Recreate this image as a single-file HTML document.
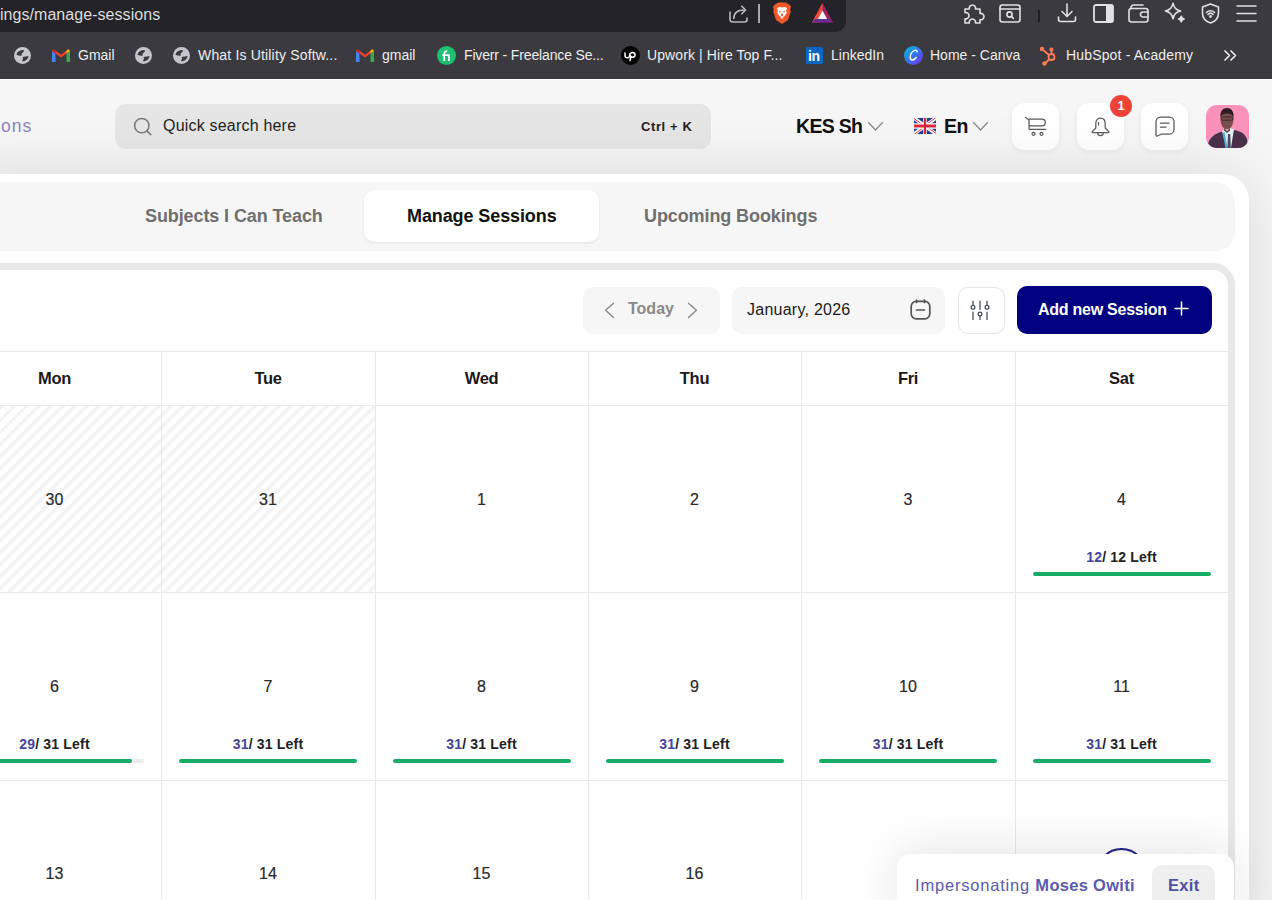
<!DOCTYPE html>
<html><head><meta charset="utf-8">
<style>
*{box-sizing:border-box;margin:0;padding:0}
html,body{width:1272px;height:900px;overflow:hidden;background:#f6f6f6;font-family:"Liberation Sans",sans-serif}
.abs{position:absolute}
.txt{position:absolute;white-space:nowrap;line-height:1}
svg{position:absolute;overflow:visible}
#chrome{left:0;top:0;width:1272px;height:79px;background:#3b3a3f}
#url{left:-20px;top:0;width:866px;height:32px;background:#242328;border-bottom-right-radius:11px}
.bm{position:absolute;top:48px;color:#ededed;font-size:14px;letter-spacing:0;white-space:nowrap;line-height:1}
#hdr{left:0;top:79px;width:1272px;height:95px;background:#f6f6f6;border-top:1px solid #fff}
#search{left:115px;top:104px;width:596px;height:45px;background:#e6e6e6;border-radius:11px}
.ibtn{position:absolute;top:103px;width:47px;height:47px;background:#fff;border-radius:12px;box-shadow:0 2px 6px rgba(0,0,0,.05)}
#rightbg{left:1249px;top:174px;width:23px;height:726px;background:linear-gradient(90deg,#e8e8e8,#eeeeee)}
#panel{left:-40px;top:174px;width:1289px;height:760px;background:#fff;border-top-right-radius:26px;box-shadow:0 0 64px rgba(0,0,0,.115)}
#tabs{left:-40px;top:182px;width:1275px;height:69px;background:#f6f6f6;border-radius:0 20px 20px 0}
#acttab{left:364px;top:190px;width:235px;height:52px;background:#fff;border-radius:10px;box-shadow:0 1px 3px rgba(0,0,0,.08)}
#cal{left:-300px;top:263px;width:1535px;height:760px;border:7px solid #e8e8e8;border-radius:0 22px 0 0;background:#fff}
.tbtn{position:absolute;top:287px;height:47px;border-radius:10px}
.vl{position:absolute;top:351px;width:1px;height:560px;background:#e9e9e9}
.hl{position:absolute;left:0;width:1228px;height:1px;background:#e9e9e9}
.hd{position:absolute;top:369.5px;font-size:16.5px;letter-spacing:-0.3px;font-weight:bold;color:#1a1a1a;text-align:center;line-height:1}
.dn{position:absolute;font-size:16px;color:#2a2a2a;text-align:center;line-height:1;-webkit-text-stroke:0.2px #2a2a2a}
.lf{position:absolute;font-size:14px;font-weight:bold;color:#222;text-align:center;line-height:1;letter-spacing:0.2px}
.lf span{color:#4544a0}
.bar{position:absolute;height:4px;border-radius:2px;background:#16ae66}
.hatch{position:absolute;background:repeating-linear-gradient(135deg,#f3f3f3 0 3.5px,#fefefe 3.5px 8.5px)}
</style></head>
<body>

<div id="chrome" class="abs"></div>
<div id="url" class="abs"></div>
<div class="txt" style="left:0;top:7px;color:#dcdcdc;font-size:16px;letter-spacing:0.05px">ings/manage-sessions</div>
<svg style="left:729px;top:4px" width="20" height="19" viewBox="0 0 20 19" fill="none" stroke="#b9b9bd" stroke-width="1.6" stroke-linecap="round" stroke-linejoin="round"><path d="M1 8v7.5a2.5 2.5 0 0 0 2.5 2.5h12a2.5 2.5 0 0 0 2.5-2.5V14"/><path d="M4.8 14.5c0-5.5 3.5-8.5 10.5-8.5"/><path d="M12.8 2.2L16.6 6l-3.8 3.8"/></svg>
<div class="abs" style="left:758px;top:4px;width:1.5px;height:19px;background:#a9a9ad"></div>
<svg style="left:772px;top:2px" width="20" height="22" viewBox="0 0 20 22"><path d="M3 2.5L6.5 0.5h7L17 2.5l2 2-0.8 3 0.6 2-2.8 8.5L10 22l-6-4-2.8-8.5 0.6-2L1 4.5z" fill="#f1592a"/><path d="M5 6l2.5-1 2.5 0.6L12.5 5 15 6l-1 3 1 1.5-2.5 3.5-2.5 1.5-2.5-1.5L5 10.5 6 9z" fill="#fff"/><path d="M8 15.5h4l-2 1.6z" fill="#fff"/><path d="M6.8 8.6l2.3.9-1.2 1.2z M13.2 8.6l-2.3.9 1.2 1.2z M9.1 11.5h1.8v2.3l-.9.6-.9-.6z" fill="#f1592a"/></svg>
<svg style="left:812px;top:3px" width="21" height="20" viewBox="0 0 21 20"><path d="M10.5 0L0 19.5h21z" fill="#9e1f63"/><path d="M10.5 0L0 19.5h6.5l4-13z" fill="#f04b3a"/><path d="M0 19.5h21l-3-3.5H3z" fill="#662d91"/><path d="M10.5 7.5L6 16h9z" fill="#fff"/></svg>
<svg style="left:963px;top:2px" width="23" height="22" viewBox="0 0 23 22" fill="none" stroke="#e2e2e4" stroke-width="1.6" stroke-linecap="round" stroke-linejoin="round"><path d="M2 7h4.3a3.2 3.2 0 1 1 6.2 0H17v4.5a3.2 3.2 0 1 1 0 6.2V21h-4.5a3.2 3.2 0 1 0-6.2 0H2v-4.2a3.2 3.2 0 1 0 0-6.2z"/></svg>
<svg style="left:999px;top:4px" width="22" height="19" viewBox="0 0 22 19" fill="none" stroke="#e2e2e4" stroke-width="1.6" stroke-linecap="round" stroke-linejoin="round"><rect x="1" y="1" width="20" height="17" rx="2.5"/><path d="M1 5h20"/><circle cx="10.5" cy="10.5" r="2.6"/><path d="M12.4 12.4l2 2"/></svg>
<div class="abs" style="left:1038px;top:10px;width:2px;height:12px;background:#202024"></div>
<svg style="left:1057px;top:3px" width="20" height="20" viewBox="0 0 20 20" fill="none" stroke="#e2e2e4" stroke-width="1.6" stroke-linecap="round" stroke-linejoin="round"><path d="M10 1v12M5 8.5l5 5 5-5"/><path d="M1.5 14v2.5a2 2 0 0 0 2 2h13a2 2 0 0 0 2-2V14"/></svg>
<svg style="left:1093px;top:4px" width="21" height="19" viewBox="0 0 21 19"><rect x="1" y="1" width="19" height="17" rx="2" fill="none" stroke="#e2e2e4" stroke-width="1.8"/><rect x="13" y="1" width="7" height="17" fill="#e2e2e4"/></svg>
<svg style="left:1128px;top:4px" width="21" height="19" viewBox="0 0 21 19" fill="none" stroke="#e2e2e4" stroke-width="1.6" stroke-linecap="round" stroke-linejoin="round"><path d="M3 4.5V3.5A2.5 2.5 0 0 1 5.5 1H15"/><rect x="1" y="4.5" width="19" height="13.5" rx="2.5"/><path d="M20 8h-5a2.5 2.5 0 0 0 0 5h5"/></svg>
<svg style="left:1164px;top:2px" width="22" height="22" viewBox="0 0 22 22" fill="none" stroke="#e2e2e4" stroke-width="1.6" stroke-linecap="round" stroke-linejoin="round"><path d="M9 1.2c.8 4.6 3 6.9 7.6 7.8-4.6.9-6.8 3.2-7.6 7.8-.8-4.6-3-6.9-7.6-7.8 4.6-.9 6.8-3.2 7.6-7.8z"/><path d="M17.3 14.2c.3 1.7 1.1 2.5 2.8 2.8-1.7.3-2.5 1.1-2.8 2.8-.3-1.7-1.1-2.5-2.8-2.8 1.7-.3 2.5-1.1 2.8-2.8z" fill="#e2e2e4"/></svg>
<svg style="left:1201px;top:3px" width="19" height="21" viewBox="0 0 19 21" fill="none" stroke="#e2e2e4" stroke-width="1.6" stroke-linecap="round" stroke-linejoin="round"><path d="M9.5 1L17.5 4v6c0 5-3.5 8.5-8 10-4.5-1.5-8-5-8-10V4z"/><path d="M5.5 9.5a5.5 5.5 0 0 1 8 0M7 11.5a3 3 0 0 1 5 0"/><circle cx="9.5" cy="13.5" r=".6" fill="#e2e2e4"/></svg>
<svg style="left:1236px;top:4px" width="21" height="19" viewBox="0 0 21 19" fill="none" stroke="#e2e2e4" stroke-width="1.6" stroke-linecap="round" stroke-linejoin="round" stroke-width="1.8"><path d="M1 2h19M1 9.5h19M1 17h19"/></svg>
<svg style="left:14px;top:47px" width="17" height="17" viewBox="0 0 16 16"><circle cx="8" cy="8" r="8" fill="#c4c6ca"/><path d="M2.3 7.3C2.8 4.8 5 3 8 2.9c1.5 0 2 .7 1 1.6-1 .9-2.2 1.5-1.8 3.7-1.7.3-3.2-.2-4.9-.9z M8 9.4c2-.5 4-.7 5.7-1-.3 2.6-2.2 4.6-5.2 5.1-1 0-1.2-.5-.5-1.5.8-1 .5-1.8 0-2.6z" fill="#3b3a3f"/></svg>
<svg style="left:52px;top:49px" width="18" height="13" viewBox="0 0 18 13"><path d="M0 2v11h3.5V4.5z" fill="#4285f4"/><path d="M18 2v11h-3.5V4.5z" fill="#34a853"/><path d="M0 2L9 8.5 18 2 16.5.2 9 5.6 1.5.2z" fill="#ea4335"/><path d="M14.5 4.5L18 2 16.5.2 14.5 1.6z" fill="#fbbc04"/><path d="M0 2l3.5 2.5V1.6L1.5.2z" fill="#c5221f"/></svg>
<div class="bm" style="left:78px">Gmail</div>
<svg style="left:135px;top:47px" width="17" height="17" viewBox="0 0 16 16"><circle cx="8" cy="8" r="8" fill="#c4c6ca"/><path d="M2.3 7.3C2.8 4.8 5 3 8 2.9c1.5 0 2 .7 1 1.6-1 .9-2.2 1.5-1.8 3.7-1.7.3-3.2-.2-4.9-.9z M8 9.4c2-.5 4-.7 5.7-1-.3 2.6-2.2 4.6-5.2 5.1-1 0-1.2-.5-.5-1.5.8-1 .5-1.8 0-2.6z" fill="#3b3a3f"/></svg>
<svg style="left:173px;top:47px" width="17" height="17" viewBox="0 0 16 16"><circle cx="8" cy="8" r="8" fill="#c4c6ca"/><path d="M2.3 7.3C2.8 4.8 5 3 8 2.9c1.5 0 2 .7 1 1.6-1 .9-2.2 1.5-1.8 3.7-1.7.3-3.2-.2-4.9-.9z M8 9.4c2-.5 4-.7 5.7-1-.3 2.6-2.2 4.6-5.2 5.1-1 0-1.2-.5-.5-1.5.8-1 .5-1.8 0-2.6z" fill="#3b3a3f"/></svg>
<div class="bm" style="left:198px;letter-spacing:0.17px">What Is Utility Softw...</div>
<svg style="left:356px;top:49px" width="18" height="13" viewBox="0 0 18 13"><path d="M0 2v11h3.5V4.5z" fill="#4285f4"/><path d="M18 2v11h-3.5V4.5z" fill="#34a853"/><path d="M0 2L9 8.5 18 2 16.5.2 9 5.6 1.5.2z" fill="#ea4335"/><path d="M14.5 4.5L18 2 16.5.2 14.5 1.6z" fill="#fbbc04"/><path d="M0 2l3.5 2.5V1.6L1.5.2z" fill="#c5221f"/></svg>
<div class="bm" style="left:382px">gmail</div>
<svg style="left:437px;top:45.5px" width="19" height="19" viewBox="0 0 19 19"><circle cx="9.5" cy="9.5" r="9.5" fill="#1dbf73"/><path d="M7.2 15V8.2M5.3 9.2h6.6V15M7.2 8.2c0-2 .9-3 3-3" fill="none" stroke="#fff" stroke-width="1.7"/></svg>
<div class="bm" style="left:464px;letter-spacing:-0.15px">Fiverr - Freelance Se...</div>
<svg style="left:621px;top:45.5px" width="19" height="19" viewBox="0 0 19 19"><circle cx="9.5" cy="9.5" r="9.5" fill="#000"/><path d="M4 7v2.5a2.3 2.3 0 0 0 4.6 0c0-1.5 1.3-3 3-3a2.4 2.4 0 1 1 0 4.8c-1.3 0-2.4-1-3-3.2M10 10.5l-1 4" fill="none" stroke="#fff" stroke-width="1.5" stroke-linecap="round"/></svg>
<div class="bm" style="left:647px;letter-spacing:0.1px">Upwork | Hire Top F...</div>
<div class="abs" style="left:806px;top:47px;width:17px;height:17px;background:#0a66c2;border-radius:1.5px"></div>
<div class="txt" style="left:808px;top:49px;color:#fff;font-size:14px;font-weight:bold;letter-spacing:-0.3px">in</div>
<div class="bm" style="left:831px">LinkedIn</div>
<svg style="left:903.5px;top:45.5px" width="19" height="19" viewBox="0 0 19 19"><defs><linearGradient id="cg" x1="0" y1="0" x2="1" y2="1"><stop offset="0" stop-color="#00c4cc"/><stop offset=".55" stop-color="#3b6cf0"/><stop offset="1" stop-color="#7d2ae8"/></linearGradient></defs><circle cx="9.5" cy="9.5" r="9.5" fill="url(#cg)"/><path d="M13.2 5.8c-.2-1.4-1.4-1.9-2.6-1.4-2.4.9-4.4 4-4.4 7 0 2.6 2 3.1 3.8 2.1 .9-.5 1.6-1.2 2.2-2" fill="none" stroke="#fff" stroke-width="1.5" stroke-linecap="round"/></svg>
<div class="bm" style="left:930px">Home - Canva</div>
<svg style="left:1040px;top:47px" width="18" height="18" viewBox="0 0 18 18" fill="none" stroke="#ff7a59" stroke-width="1.8" stroke-linecap="round"><circle cx="11.5" cy="10" r="3"/><path d="M2 2l7 6M11.5 3v4M9 12.5l-4 4"/><circle cx="2" cy="2" r="1.3" fill="#ff7a59"/><circle cx="11.5" cy="2.5" r="1.2" fill="#ff7a59"/><circle cx="4.5" cy="16.5" r="1.3" fill="#ff7a59"/></svg>
<div class="bm" style="left:1066px;letter-spacing:0.16px">HubSpot - Academy</div>
<svg style="left:1224px;top:50px" width="13" height="11" viewBox="0 0 13 11" fill="none" stroke="#e8e8e8" stroke-width="1.7" stroke-linecap="round" stroke-linejoin="round"><path d="M1 1l4.5 4.5L1 10M7 1l4.5 4.5L7 10"/></svg>
<div id="hdr" class="abs"></div>
<div class="txt" style="left:1px;top:117.5px;font-size:17.5px;letter-spacing:1px;color:#8c84bd">ons</div>
<div id="search" class="abs"></div>
<svg style="left:133px;top:117px" width="20" height="20" viewBox="0 0 20 20" fill="none" stroke="#7a7a7a" stroke-width="1.5" stroke-linecap="round"><circle cx="8.8" cy="8.6" r="7.2"/><path d="M14 14l3.8 3.6"/></svg>
<div class="txt" style="left:163px;top:118px;font-size:16px;color:#1e1e1e;letter-spacing:0.2px">Quick search here</div>
<div class="txt" style="left:641px;top:120px;font-size:13px;font-weight:bold;color:#222;letter-spacing:0.6px">Ctrl + K</div>
<div class="txt" style="left:796px;top:117px;font-size:19.5px;font-weight:bold;color:#111;letter-spacing:-0.7px">KES Sh</div>
<svg style="left:868px;top:122px" width="15" height="9" viewBox="0 0 15 9" fill="none" stroke="#8a8a8a" stroke-width="1.2" stroke-linecap="round"><path d="M.5 .5l7 7.5 7-7.5"/></svg>
<svg style="left:914px;top:118px" width="22" height="16" viewBox="0 0 60 30" preserveAspectRatio="none"><defs><clipPath id="ft"><path d="M30,15h30v15zv15h-30zh-30v-15zv-15h30z"/></clipPath></defs><rect width="60" height="30" fill="#1f3f8f"/><path d="M0,0L60,30M60,0L0,30" stroke="#fff" stroke-width="7"/><path d="M0,0L60,30M60,0L0,30" clip-path="url(#ft)" stroke="#d7263d" stroke-width="3"/><path d="M30,0v30M0,15h60" stroke="#fff" stroke-width="10"/><path d="M30,0v30M0,15h60" stroke="#d7263d" stroke-width="6"/></svg>
<div class="txt" style="left:944px;top:117px;font-size:19.5px;font-weight:bold;color:#111;letter-spacing:-0.5px">En</div>
<svg style="left:973px;top:122px" width="15" height="9" viewBox="0 0 15 9" fill="none" stroke="#8a8a8a" stroke-width="1.2" stroke-linecap="round"><path d="M.5 .5l7 7.5 7-7.5"/></svg>
<div class="ibtn" style="left:1012px"></div>
<div class="ibtn" style="left:1077px"></div>
<div class="ibtn" style="left:1141px"></div>
<svg style="left:1025px;top:117px" width="22" height="20" viewBox="0 0 22 20" fill="none" stroke="#5a5a5a" stroke-width="1.25" stroke-linecap="round" stroke-linejoin="round"><path d="M.5 .5L3.5 2.5c.5.5.6 1 .6 1.8V12.3"/><path d="M4.5 2.2H17a3.3 3.3 0 0 1 0 6.6H4.5"/><path d="M4.6 12.3H20.8"/><circle cx="8.5" cy="16.8" r="1.5"/><circle cx="16.5" cy="16.8" r="1.5"/></svg>
<svg style="left:1091px;top:117px" width="19" height="20" viewBox="0 0 19 20" fill="none" stroke="#5a5a5a" stroke-width="1.25" stroke-linecap="round" stroke-linejoin="round"><path d="M9.5 1C6.5 1 4.8 3.3 4.8 6.5v4.5L1.2 14.6c-.3.5 0 .9.5.9h15.6c.5 0 .8-.4.5-.9L14.2 11V6.5C14.2 3.3 12.5 1 9.5 1z"/><path d="M6.6 15.5c0 2 1.3 3.2 2.9 3.2s2.9-1.2 2.9-3.2"/><path d="M7.5 5.5v2.5"/></svg>
<div class="abs" style="left:1110px;top:95px;width:22px;height:22px;border-radius:50%;background:#ee4236;color:#fff;font-size:13px;font-weight:bold;text-align:center;line-height:22px">1</div>
<svg style="left:1155px;top:116px" width="20" height="21" viewBox="0 0 20 21" fill="none" stroke="#5a5a5a" stroke-width="1.25" stroke-linecap="round" stroke-linejoin="round"><path d="M5.5 1h9A4.5 4.5 0 0 1 19 5.5v8a4.5 4.5 0 0 1-4.5 4.5H6.5L2.5 20C1.7 20.3 1 19.8 1 19V5.5A4.5 4.5 0 0 1 5.5 1z"/><path d="M5.5 7.2h8.5M5.5 11h5.5"/></svg>
<svg style="left:1206px;top:105px" width="43" height="43" viewBox="0 0 43 43"><defs><clipPath id="av"><rect width="43" height="43" rx="11"/></clipPath></defs><g clip-path="url(#av)"><rect width="43" height="43" fill="#fa92ba"/><path d="M1 43C2 36 5 31 12 28L20 25h8c7 1 11 4 13 9l1 9z" fill="#4b3049"/><path d="M16 26l4.5 17h4.5L28 24l-6-1z" fill="#e4f0f4"/><path d="M16.5 28l3 15h2l-3-16z" fill="#4fb0da"/><path d="M22 29h2.2l.6 14h-3.4z" fill="#4c4a60"/><path d="M14.5 13c0-6 2.5-9.5 6.5-9.5s6.5 3.5 6.5 9.5c0 6-2 11-6.5 11.5-4.5-.5-6.5-5.5-6.5-11.5z" fill="#7b4d4b"/><path d="M14.3 12c0-6 2.5-9 6.7-9s6.7 3 6.7 9c-1.5-2.5-3.5-3.5-6.7-3.5s-5.2 1-6.7 3.5z" fill="#2e1c20"/><rect x="15.2" y="12" width="11.8" height="3.2" rx="1.2" fill="none" stroke="#3a2a30" stroke-width="1"/><path d="M18 23l3 3 3-3v2.5l-3 2.5-3-2.5z" fill="#6a403e"/></g></svg>
<div id="panel" class="abs"></div>
<div id="tabs" class="abs"></div>
<div id="acttab" class="abs"></div>
<div class="txt" style="left:145px;top:207px;font-size:18px;font-weight:bold;color:#6f6f6f;letter-spacing:-0.1px">Subjects I Can Teach</div>
<div class="txt" style="left:407px;top:207px;font-size:18px;font-weight:bold;color:#111;letter-spacing:-0.1px">Manage Sessions</div>
<div class="txt" style="left:644px;top:207px;font-size:18px;font-weight:bold;color:#6f6f6f;letter-spacing:-0.1px">Upcoming Bookings</div>
<div id="cal" class="abs"></div>
<div class="tbtn" style="left:583px;width:137px;background:#f6f6f6"></div>
<svg style="left:604px;top:302px" width="11" height="17" viewBox="0 0 11 17" fill="none" stroke="#8a8a8a" stroke-width="1.4" stroke-linecap="round" stroke-linejoin="round"><path d="M9.5 1.2L1.6 8.3l7.9 7.2"/></svg>
<div class="txt" style="left:628px;top:301px;font-size:16px;font-weight:bold;color:#8a8a8a">Today</div>
<svg style="left:687px;top:302px" width="11" height="17" viewBox="0 0 11 17" fill="none" stroke="#8a8a8a" stroke-width="1.4" stroke-linecap="round" stroke-linejoin="round"><path d="M1.5 1.2l7.9 7.1-7.9 7.2"/></svg>
<div class="tbtn" style="left:732px;width:213px;background:#f6f6f6"></div>
<div class="txt" style="left:747px;top:302px;font-size:16px;color:#1a1a1a;letter-spacing:0.25px">January, 2026</div>
<svg style="left:910px;top:299px" width="21" height="21" viewBox="0 0 21 21" fill="none" stroke="#555" stroke-width="1.7" stroke-linecap="round"><rect x="1.2" y="2.4" width="18.6" height="17.4" rx="5"/><path d="M6.5 1v2.5M14.5 1v2.5M6.5 11h8"/></svg>
<div class="tbtn" style="left:958px;width:47px;background:#fff;border:1px solid #e6e6e6"></div>
<svg style="left:968px;top:299px" width="24" height="23" viewBox="0 0 24 23" fill="none" stroke="#3d4350" stroke-width="1.2" stroke-linecap="round"><path d="M5 2v4.3M5 13v7.5M12 2v8.5M12 17.2v3.3M19 2v4.3M19 13v7.5"/><circle cx="5" cy="8.2" r="1.9" fill="#fff"/><circle cx="19" cy="8.2" r="1.9" fill="#fff"/><circle cx="12" cy="15" r="1.9" fill="#fff"/></svg>
<div class="tbtn" style="left:1017px;top:286px;width:195px;height:48px;background:#000080"></div>
<div class="txt" style="left:1038px;top:302px;font-size:16px;font-weight:bold;color:#fff;letter-spacing:-0.25px">Add new Session</div>
<svg style="left:1174px;top:301px" width="15" height="15" viewBox="0 0 15 15" fill="none" stroke="#fff" stroke-width="1.5" stroke-linecap="round"><path d="M7.5 1v13M1 7.5h13"/></svg>
<div class="hatch" style="left:0px;top:406px;width:375px;height:186px"></div>
<div class="hl" style="top:351px"></div>
<div class="hl" style="top:405px"></div>
<div class="hl" style="top:592px"></div>
<div class="hl" style="top:780px"></div>
<div class="vl" style="left:161px"></div>
<div class="vl" style="left:375px"></div>
<div class="vl" style="left:588px"></div>
<div class="vl" style="left:801px"></div>
<div class="vl" style="left:1015px"></div>
<div class="hd" style="left:-52px;width:213px">Mon</div>
<div class="hd" style="left:161px;width:214px">Tue</div>
<div class="hd" style="left:375px;width:213px">Wed</div>
<div class="hd" style="left:588px;width:213px">Thu</div>
<div class="hd" style="left:801px;width:214px">Fri</div>
<div class="hd" style="left:1015px;width:213px">Sat</div>
<div class="dn" style="left:-52px;top:492px;width:213px">30</div>
<div class="dn" style="left:161px;top:492px;width:214px">31</div>
<div class="dn" style="left:375px;top:492px;width:213px">1</div>
<div class="dn" style="left:588px;top:492px;width:213px">2</div>
<div class="dn" style="left:801px;top:492px;width:214px">3</div>
<div class="dn" style="left:1015px;top:492px;width:213px">4</div>
<div class="dn" style="left:-52px;top:679px;width:213px">6</div>
<div class="dn" style="left:161px;top:679px;width:214px">7</div>
<div class="dn" style="left:375px;top:679px;width:213px">8</div>
<div class="dn" style="left:588px;top:679px;width:213px">9</div>
<div class="dn" style="left:801px;top:679px;width:214px">10</div>
<div class="dn" style="left:1015px;top:679px;width:213px">11</div>
<div class="dn" style="left:-52px;top:866px;width:213px">13</div>
<div class="dn" style="left:161px;top:866px;width:214px">14</div>
<div class="dn" style="left:375px;top:866px;width:213px">15</div>
<div class="dn" style="left:588px;top:866px;width:213px">16</div>
<div class="dn" style="left:801px;top:866px;width:214px">17</div>
<div class="dn" style="left:1015px;top:866px;width:213px">18</div>
<div class="lf" style="left:1015px;top:550px;width:213px"><span>12</span>/ 12 Left</div>
<div class="bar" style="left:1033px;top:572px;width:178px"></div>
<div class="lf" style="left:-52px;top:737px;width:213px"><span>29</span>/ 31 Left</div>
<div class="bar" style="left:-34px;top:759px;width:178px;background:#ebebeb"></div>
<div class="bar" style="left:-34px;top:759px;width:166px"></div>
<div class="lf" style="left:161px;top:737px;width:214px"><span>31</span>/ 31 Left</div>
<div class="bar" style="left:179px;top:759px;width:178px"></div>
<div class="lf" style="left:375px;top:737px;width:213px"><span>31</span>/ 31 Left</div>
<div class="bar" style="left:393px;top:759px;width:178px"></div>
<div class="lf" style="left:588px;top:737px;width:213px"><span>31</span>/ 31 Left</div>
<div class="bar" style="left:606px;top:759px;width:178px"></div>
<div class="lf" style="left:801px;top:737px;width:214px"><span>31</span>/ 31 Left</div>
<div class="bar" style="left:819px;top:759px;width:178px"></div>
<div class="lf" style="left:1015px;top:737px;width:213px"><span>31</span>/ 31 Left</div>
<div class="bar" style="left:1033px;top:759px;width:178px"></div>
<div class="abs" style="left:1096px;top:848px;width:51px;height:51px;border-radius:50%;border:2px solid #22228a"></div>
<div class="abs" style="left:897px;top:854px;width:337px;height:80px;background:#fff;border-radius:13px;box-shadow:0 -6px 50px rgba(0,0,0,.10)"></div>
<div class="txt" style="left:915px;top:877px;font-size:16.5px;letter-spacing:0.8px;color:#5a5ab0">Impersonating <b style="letter-spacing:0.3px">Moses Owiti</b></div>
<div class="abs" style="left:1152px;top:865px;width:63px;height:60px;background:#efefef;border-radius:10px"></div>
<div class="txt" style="left:1168px;top:877px;font-size:16.5px;font-weight:bold;color:#4f4fa8;letter-spacing:0.3px">Exit</div>
</body></html>
